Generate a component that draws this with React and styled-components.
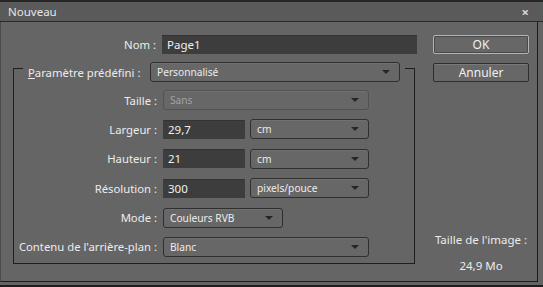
import styled, { createGlobalStyle } from "styled-components";

const GlobalStyle = createGlobalStyle`
  html, body {
    margin: 0;
    padding: 0;
    background: #5f5f5f;
  }
  body {
    font-family: "Noto Sans", "Open Sans", sans-serif;
  }
`;

const Window = styled.div`
  width: 543px;
  height: 287px;
  box-sizing: border-box;
  border-top: 2px solid #262626;
  background: #646464;
  display: flex;
  flex-direction: column;
  overflow: hidden;
`;

const TitleBar = styled.div`
  height: 19px;
  flex: none;
  display: flex;
  align-items: center;
  justify-content: space-between;
  padding: 0 14px 0 8px;
  background: #5a5a5a;
  border-bottom: 1px solid #2a2a2a;
  color: #e6e6e6;
  font-size: 11.5px;
`;

const Close = styled.span`
  font-size: 13px;
  color: #d8d8d8;
  font-weight: bold;
`;

const Body = styled.div`
  height: 260px;
  flex: none;
  box-sizing: border-box;
  margin-right: 5px;
  border-left: 1px solid #4a4a4a;
  border-right: 1px solid #1c1c1c;
  border-bottom: 1px solid #1c1c1c;
  background: #656565;
  display: flex;
`;

const BottomEdge = styled.div`
  margin-top: 3px;
  height: 2px;
  background: #1e1e1e;
`;

const FormCol = styled.div`
  width: 416px;
  padding-top: 13px;
  display: flex;
  flex-direction: column;
`;

const Row = styled.div`
  display: flex;
  align-items: center;
  height: ${(p) => p.$h || 20}px;
`;

const Label = styled.label`
  width: ${(p) => p.$w}px;
  padding-right: 6px;
  text-align: right;
  font-size: 11.3px;
  color: #ececec;
  white-space: nowrap;
  flex: none;
`;

const TextInput = styled.div`
  width: ${(p) => p.$w}px;
  height: 19px;
  box-sizing: border-box;
  background: #3d3d3d;
  border-top: 1px solid #333;
  color: #f0f0f0;
  font-size: 11.5px;
  line-height: 18px;
  padding-left: 5px;
  flex: none;
`;

const Select = styled.div`
  width: ${(p) => p.$w}px;
  height: 20px;
  box-sizing: border-box;
  border: 1px solid ${(p) => (p.$disabled ? "#525252" : "#2f2f2f")};
  border-radius: 3px;
  background: #676767;
  box-shadow: inset 0 1px 0 #707070;
  display: flex;
  align-items: center;
  justify-content: space-between;
  padding: 0 9px 0 6px;
  color: ${(p) => (p.$disabled ? "#a2a2a2" : "#ececec")};
  font-size: 10.2px;
  margin-left: ${(p) => p.$ml || 0}px;
  flex: none;
`;

const Arrow = styled.span`
  width: 0;
  height: 0;
  border-left: 4px solid transparent;
  border-right: 4px solid transparent;
  border-top: 4px solid #262626;
`;

const Group = styled.fieldset`
  margin: 1px 0 0 12px;
  width: 402px;
  box-sizing: border-box;
  padding: 0 0 6px 0;
  border: 1px solid #1e1e1e;
  min-inline-size: 0;
`;

const Legend = styled.legend`
  margin-left: 9px;
  padding: 7px 5px 0 5px;
  display: flex;
  align-items: center;
  gap: 12px;
`;

const LegendLabel = styled.span`
  width: 110px;
  font-size: 11.3px;
  color: #ececec;
  white-space: nowrap;
`;

const Rows = styled.div`
  padding-top: 8px;
  display: flex;
  flex-direction: column;
  gap: 9.4px;
`;

const SideCol = styled.div`
  margin-left: 16px;
  width: 96px;
  padding-top: 13px;
  padding-bottom: 7px;
  display: flex;
  flex-direction: column;
  align-items: center;
`;

const Button = styled.button`
  width: 96px;
  height: 19px;
  margin-bottom: 9px;
  box-sizing: border-box;
  border-radius: 2px;
  border: 1px solid ${(p) => (p.$default ? "#b4b4b4" : "#2e2e2e")};
  box-shadow: ${(p) => (p.$default ? "inset 0 0 0 1px #4a4a4a" : "inset 0 1px 0 #7a7a7a")};
  background: #676767;
  color: #f0f0f0;
  font-family: inherit;
  font-size: 12px;
  padding: 0;
`;

const Info = styled.div`
  margin-top: auto;
  display: flex;
  flex-direction: column;
  align-items: center;
  gap: 10px;
  color: #ececec;
  font-size: 11.5px;
  white-space: nowrap;
  line-height: 16px;
`;

function Dropdown({ value, w, ml, disabled }) {
  return (
    <Select $w={w} $ml={ml} $disabled={disabled}>
      <span>{value}</span>
      <Arrow />
    </Select>
  );
}

export default function App() {
  return (
    <>
      <GlobalStyle />
      <Window>
        <TitleBar>
          <span>Nouveau</span>
          <Close>×</Close>
        </TitleBar>
        <Body>
          <FormCol>
            <Row $h={19}>
              <Label $w={155}>Nom :</Label>
              <TextInput $w={255}>Page1</TextInput>
            </Row>
            <Group>
              <Legend>
                <LegendLabel>
                  <u>P</u>aramètre prédéfini :
                </LegendLabel>
                <Dropdown value="Personnalisé" w={250} />
              </Legend>
              <Rows>
                <Row>
                  <Label $w={143}>Taille :</Label>
                  <Dropdown value="Sans" w={206} disabled />
                </Row>
                <Row>
                  <Label $w={143}>Largeur :</Label>
                  <TextInput $w={82}>29,7</TextInput>
                  <Dropdown value="cm" w={119} ml={5} />
                </Row>
                <Row>
                  <Label $w={143}>Hauteur :</Label>
                  <TextInput $w={82}>21</TextInput>
                  <Dropdown value="cm" w={119} ml={5} />
                </Row>
                <Row>
                  <Label $w={143}>Résolution :</Label>
                  <TextInput $w={82}>300</TextInput>
                  <Dropdown value="pixels/pouce" w={119} ml={5} />
                </Row>
                <Row>
                  <Label $w={143}>Mode :</Label>
                  <Dropdown value="Couleurs RVB" w={120} />
                </Row>
                <Row>
                  <Label $w={143}>Contenu de l'arrière-plan :</Label>
                  <Dropdown value="Blanc" w={206} />
                </Row>
              </Rows>
            </Group>
          </FormCol>
          <SideCol>
            <Button $default>OK</Button>
            <Button>Annuler</Button>
            <Info>
              <span>Taille de l'image :</span>
              <span>24,9 Mo</span>
            </Info>
          </SideCol>
        </Body>
        <BottomEdge />
      </Window>
    </>
  );
}
